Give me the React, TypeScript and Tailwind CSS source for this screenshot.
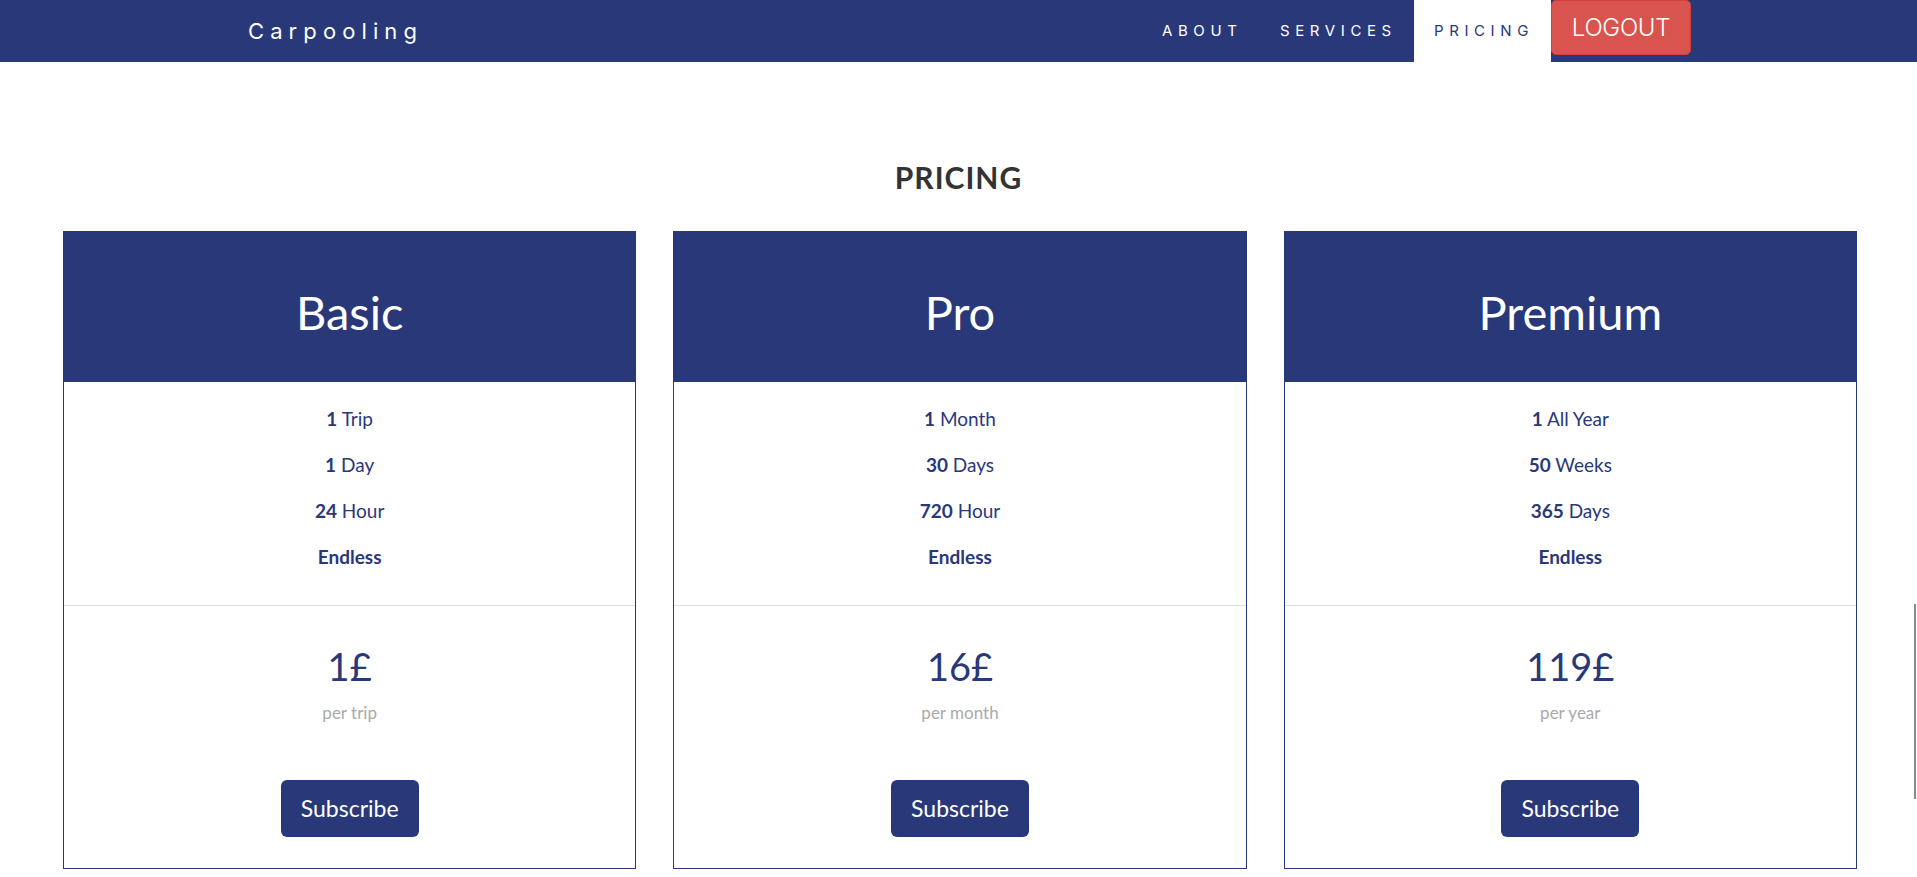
import React from "react";

type Plan = {
  name: string;
  features: [string, string][];
  price: string;
  per: string;
};

const plans: Plan[] = [
  {
    name: "Basic",
    features: [
      ["1", "Trip"],
      ["1", "Day"],
      ["24", "Hour"],
      ["Endless", ""],
    ],
    price: "1£",
    per: "per trip",
  },
  {
    name: "Pro",
    features: [
      ["1", "Month"],
      ["30", "Days"],
      ["720", "Hour"],
      ["Endless", ""],
    ],
    price: "16£",
    per: "per month",
  },
  {
    name: "Premium",
    features: [
      ["1", "All Year"],
      ["50", "Weeks"],
      ["365", "Days"],
      ["Endless", ""],
    ],
    price: "119£",
    per: "per year",
  },
];

function Card({ plan }: { plan: Plan }) {
  return (
    <div className="flex flex-col border border-[#293879] bg-white">
      <div className="h-[150px] bg-[#293879] pt-[57px] text-center text-[47px] leading-none text-white">
        {plan.name}
      </div>
      <ul className="pt-[14px] pb-[25px] text-center text-[19px] text-[#293879]">
        {plan.features.map(([b, r], i) => (
          <li key={i} className="h-[46px] leading-[46px]">
            <span className="font-bold">{b}</span>
            {r ? " " + r : ""}
          </li>
        ))}
      </ul>
      <div className="flex flex-col items-center border-t border-[#dddddd] pt-[41px] pb-[31px]">
        <div className="text-[38px] leading-none text-[#293879]">{plan.price}</div>
        <div className="mt-[19px] text-[17px] leading-none text-[#aaaaaa]">{plan.per}</div>
        <button className="mt-[59px] h-[57px] w-[138px] rounded-[6px] bg-[#293879] text-[23px] text-white">
          Subscribe
        </button>
      </div>
    </div>
  );
}

export default function App() {
  const navFont = { fontFamily: "Inter, 'Open Sans', sans-serif" };
  return (
    <div
      className="relative h-[877px] overflow-hidden bg-white"
      style={{ fontFamily: "Lato, 'Open Sans', sans-serif" }}
    >
      <nav
        className="flex h-[62px] items-center justify-between bg-[#293879] pl-[248px] pr-[226px] text-white"
        style={navFont}
      >
        <div className="text-[22px] font-normal tracking-[6.1px]">Carpooling</div>
        <div className="flex h-full items-start">
          <a className="flex h-full w-[118px] items-center pl-[20px] text-[15px] tracking-[5.6px] text-white">
            ABOUT
          </a>
          <a className="flex h-full w-[154px] items-center pl-[20px] text-[15px] tracking-[5.6px] text-white">
            SERVICES
          </a>
          <a className="flex h-full w-[137px] items-center bg-white pl-[20px] text-[15px] tracking-[5.6px] text-[#293879]">
            PRICING
          </a>
          <button className="flex h-[55px] w-[140px] items-center justify-center rounded-[5px] border border-[#d43f3a] bg-[#d9534f] text-[24px] font-light tracking-[-0.3px] text-white">
            LOGOUT
          </button>
        </div>
      </nav>

      <h2 className="mt-[100px] text-center text-[30px] font-bold leading-none tracking-[1px] text-[#333333]">
        PRICING
      </h2>

      <div className="mt-[39px] grid grid-cols-3 gap-[37px] pl-[63px] pr-[60px]">
        {plans.map((p) => (
          <Card key={p.name} plan={p} />
        ))}
      </div>

      <div className="absolute left-[1914px] top-[604px] h-[195px] w-[2px] bg-[#8a8a8a]" />
    </div>
  );
}
